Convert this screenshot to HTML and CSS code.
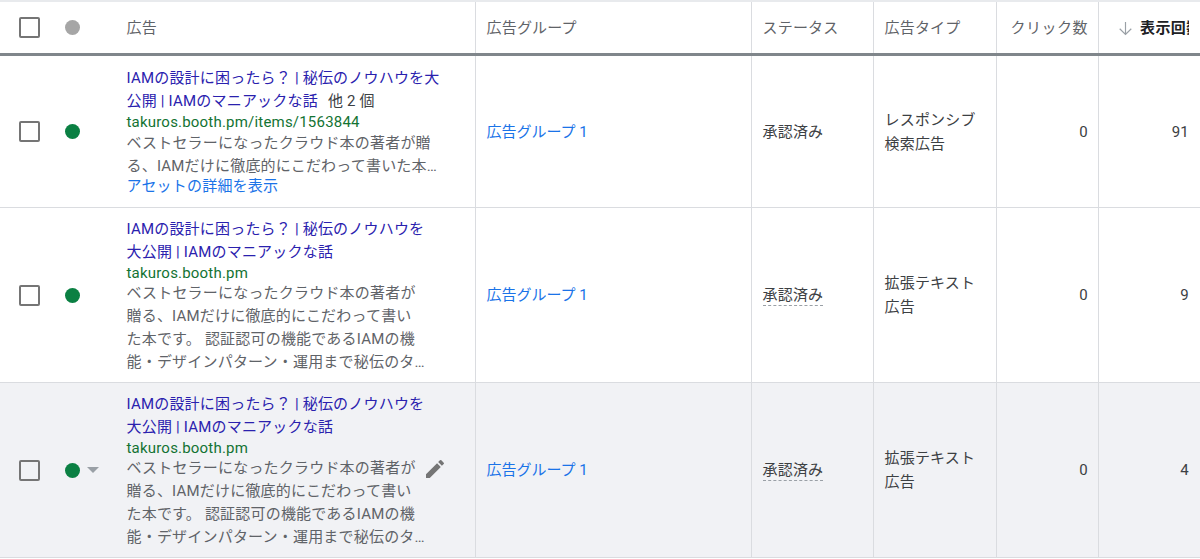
FILE: index.html
```html
<!DOCTYPE html>
<html lang="ja">
<head>
<meta charset="utf-8">
<title>広告</title>
<link rel="stylesheet" href="styles.css">
</head>
<body>
<div class="table">
  <div class="row head">
    <div class="cell select"><span class="checkbox"></span></div>
    <div class="cell state"><span class="dot grey"></span></div>
    <div class="cell ad">広告</div>
    <div class="cell group">広告グループ</div>
    <div class="cell status">ステータス</div>
    <div class="cell type">広告タイプ</div>
    <div class="cell num">クリック数</div>
    <div class="cell num last sorted">
      <svg class="arrow" viewBox="0 0 14 14" aria-hidden="true"><path d="M7 1v11.5M1.6 7.2 7 12.6l5.4-5.4" fill="none" stroke="#9aa0a6" stroke-width="1.1"/></svg>
      <span class="sort-label">表示回数</span>
    </div>
  </div>

  <div class="row r1">
    <div class="cell select"><span class="checkbox"></span></div>
    <div class="cell state"><span class="dot"></span></div>
    <div class="cell ad">
      <div class="ad-text">
        <div class="title">IAMの設計に困ったら？ | 秘伝のノウハウを大<br>公開 | IAMのマニアックな話<span class="more">他 2 個</span></div>
        <div class="url">takuros.booth.pm/items/1563844</div>
        <div class="desc">ベストセラーになったクラウド本の著者が贈<br>る、IAMだけに徹底的にこだわって書いた本…</div>
        <div class="assets">アセットの詳細を表示</div>
      </div>
    </div>
    <div class="cell group"><span class="link">広告グループ 1</span></div>
    <div class="cell status">承認済み</div>
    <div class="cell type">レスポンシブ<br>検索広告</div>
    <div class="cell num">0</div>
    <div class="cell num last">91</div>
  </div>

  <div class="row r2">
    <div class="cell select"><span class="checkbox"></span></div>
    <div class="cell state"><span class="dot"></span></div>
    <div class="cell ad">
      <div class="ad-text">
        <div class="title">IAMの設計に困ったら？ | 秘伝のノウハウを<br>大公開 | IAMのマニアックな話</div>
        <div class="url">takuros.booth.pm</div>
        <div class="desc">ベストセラーになったクラウド本の著者が<br>贈る、IAMだけに徹底的にこだわって書い<br>た本です。 認証認可の機能であるIAMの機<br>能・デザインパターン・運用まで秘伝のタ…</div>
      </div>
    </div>
    <div class="cell group"><span class="link">広告グループ 1</span></div>
    <div class="cell status"><span class="dashed">承認済み</span></div>
    <div class="cell type">拡張テキスト<br>広告</div>
    <div class="cell num">0</div>
    <div class="cell num last">9</div>
  </div>

  <div class="row r3 hover">
    <div class="cell select"><span class="checkbox"></span></div>
    <div class="cell state"><span class="dot"></span><span class="caret"></span></div>
    <div class="cell ad">
      <div class="ad-text">
        <div class="title">IAMの設計に困ったら？ | 秘伝のノウハウを<br>大公開 | IAMのマニアックな話</div>
        <div class="url">takuros.booth.pm</div>
        <div class="desc">ベストセラーになったクラウド本の著者が<br>贈る、IAMだけに徹底的にこだわって書い<br>た本です。 認証認可の機能であるIAMの機<br>能・デザインパターン・運用まで秘伝のタ…</div>
      </div>
      <svg class="edit" viewBox="0 0 24 24" aria-hidden="true"><path d="M3 17.25V21h3.75L17.81 9.94l-3.75-3.75L3 17.25zM20.71 7.04a1 1 0 0 0 0-1.41l-2.34-2.34a1 1 0 0 0-1.41 0l-1.83 1.83 3.75 3.75 1.83-1.83z" fill="#757575"/></svg>
    </div>
    <div class="cell group"><span class="link">広告グループ 1</span></div>
    <div class="cell status"><span class="dashed">承認済み</span></div>
    <div class="cell type">拡張テキスト<br>広告</div>
    <div class="cell num">0</div>
    <div class="cell num last">4</div>
  </div>
</div>
</body>
</html>
```
FILE: styles.css
```css
* { box-sizing: border-box; }
html, body { margin: 0; padding: 0; background: #fff; overflow: hidden; }
body {
  width: 1200px;
  height: 559px;
  font-family: Roboto, "Noto Sans CJK JP", sans-serif;
  font-size: 15px;
  color: #3c4043;
}
.table { border-top: 2px solid #e8eaed; }
.row {
  display: grid;
  grid-template-columns: 58px 69px 349px 276px 122px 123px 102px 101px;
  border-bottom: 1px solid #dadce0;
}
.head { height: 54px; border-bottom: 3px solid #80868b; color: #5f6368; }
.r1 { height: 152px; }
.r2, .r3 { height: 175px; }
.hover { background: #f1f2f5; }
.cell {
  display: flex;
  align-items: center;
  border-right: 1px solid #dadce0;
  line-height: 24px;
  letter-spacing: .2px;
  min-width: 0;
}
.select { border-right: 0; padding-left: 19px; }
.state { border-right: 0; padding-left: 7px; gap: 7px; }
.ad { position: relative; margin-left: -.5px; }
.group, .status, .type { padding-left: 10.5px; }
.num { justify-content: flex-end; padding-right: 10px; }
.head .num { letter-spacing: .5px; }
.last { border-right: 0; padding-right: 11px; }
.checkbox {
  width: 21px;
  height: 21px;
  border: 2.5px solid #757575;
  border-radius: 2px;
}
.dot { width: 15px; height: 15px; border-radius: 50%; background: #0b8043; flex: none; }
.dot.grey { background: #a6a6a6; }
.caret {
  width: 0;
  height: 0;
  border-left: 6.5px solid transparent;
  border-right: 6.5px solid transparent;
  border-top: 6.5px solid #9aa0a6;
}
.ad-text { width: 320px; letter-spacing: .2px; margin-top: 1px; }
.title { color: #2a21ae; line-height: 23px; white-space: nowrap; margin-bottom: -1px; }
.more { color: #3c4043; margin-left: 10px; }
.url { color: #137333; line-height: 20px; white-space: nowrap; }
.desc { color: #5f6368; line-height: 23px; white-space: nowrap; margin-top: -1px; }
.assets { color: #1a73e8; line-height: 20px; margin-top: -2px; }
.r1 .ad-text { margin-top: -1px; }
.r1 .title { margin-bottom: 0; }
.r1 .url { margin-top: -1px; }
.r1 .desc { margin-top: 0; }
.link { color: #1a73e8; letter-spacing: 0; }
.dashed { border-bottom: 1px dashed #9aa0a6; line-height: 20px; }
.head .sorted { justify-content: flex-start; padding: 0 0 0 19px; gap: 7px; color: #202124; font-weight: 700; letter-spacing: .4px; }
.arrow { width: 15px; height: 15px; flex: none; margin-top: 2px; }
.sort-label { width: 49px; overflow: hidden; white-space: nowrap; }
.edit { position: absolute; left: 296.5px; top: 74px; width: 24px; height: 24px; }
```
